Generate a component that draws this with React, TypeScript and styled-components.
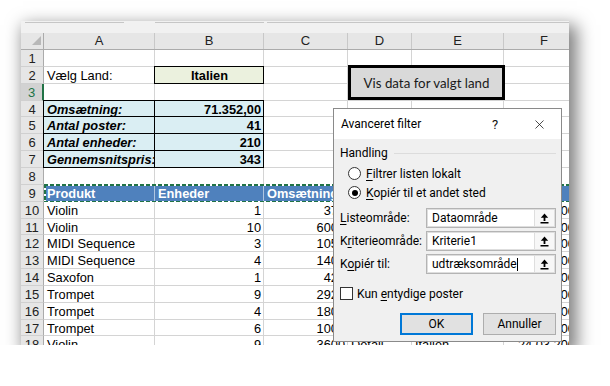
import React from "react";
import styled, { createGlobalStyle } from "styled-components";
import { X } from "lucide-react";

const GlobalStyle = createGlobalStyle`
  html, body {
    margin: 0;
    padding: 0;
    background: #fff;
  }
  body {
    font-family: "Liberation Sans", Arial, sans-serif;
  }
`;

const WIDTHS = [23, 111, 109, 84, 64, 92, 81];
const ROW_H = 16.85;
const GRID = "#d4d4d4";
const XL_GREEN = "#217346";

type CellData = {
  t?: string;
  align?: "left" | "right" | "center";
  bold?: boolean;
  italic?: boolean;
  bg?: string;
  boxed?: boolean;
  color?: string;
};

const boxBlue = { bg: "#daeef3", boxed: true, bold: true };
const head = { bg: "#4f81bd", color: "#fff", bold: true };

const sales: [string, number, number, string, string][] = [
  ["Violin", 1, 375, "Detail", "Italien"],
  ["Violin", 10, 6000, "Engros", "Italien"],
  ["MIDI Sequence", 3, 1050, "Detail", "Italien"],
  ["MIDI Sequence", 4, 1400, "Detail", "Italien"],
  ["Saxofon", 1, 425, "Detail", "Italien"],
  ["Trompet", 9, 2925, "Engros", "Italien"],
  ["Trompet", 4, 1800, "Detail", "Italien"],
  ["Trompet", 6, 1000, "Detail", "Italien"],
  ["Violin", 9, 3600, "Detail", "Italien"],
];

const rows: CellData[][] = [
  [],
  [{ t: "Vælg Land:" }, { t: "Italien", align: "center", bold: true, bg: "#ebf1de", boxed: true }],
  [],
  [{ t: "Omsætning:", italic: true, ...boxBlue }, { t: "71.352,00", align: "right", ...boxBlue }],
  [{ t: "Antal poster:", italic: true, ...boxBlue }, { t: "41", align: "right", ...boxBlue }],
  [{ t: "Antal enheder:", italic: true, ...boxBlue }, { t: "210", align: "right", ...boxBlue }],
  [{ t: "Gennemsnitspris:", italic: true, ...boxBlue }, { t: "343", align: "right", ...boxBlue }],
  [],
  [
    { t: "Produkt", ...head },
    { t: "Enheder", ...head },
    { t: "Omsætning", ...head },
    { t: "Type", ...head },
    { t: "Land", ...head },
    { t: "Dato", ...head },
  ],
  ...sales.map(([p, u, o, type, land], i) => [
    { t: p },
    { t: String(u), align: "right" as const },
    { t: String(o), align: "right" as const },
    { t: type },
    { t: land },
    { t: `${26 - (i % 3)}.03.2007`, align: "right" as const },
  ]),
];

const Page = styled.div`
  padding: 21px 0 0 21px;
`;

const Frame = styled.div`
  position: relative;
  width: 548px;
  height: 324px;
  overflow: hidden;
  background: #fff;
  box-shadow: 5px 7px 16px 3px rgba(0, 0, 0, 0.5);
`;

const TopStrip = styled.div`
  display: flex;
  height: 12px;
  background: #f1f1f1;
`;

const BarEdge = styled.div<{ $w?: number; $ml: number }>`
  margin-left: ${(p) => p.$ml}px;
  margin-top: 1px;
  width: ${(p) => (p.$w ? `${p.$w}px` : "auto")};
  flex: ${(p) => (p.$w ? "none" : 1)};
  height: 1px;
  background: #c6c6c6;
`;

const HeadRow = styled.div`
  display: flex;
  height: 17px;
  box-sizing: border-box;
  background: #e6e6e6;
  border-bottom: 1px solid #ababab;
`;

const HeadCell = styled.div<{ $w: number }>`
  position: relative;
  flex: none;
  width: ${(p) => p.$w}px;
  box-sizing: border-box;
  border-right: 1px solid #c8c8c8;
  text-align: center;
  font-size: 13px;
  line-height: 16px;
  color: #222;
`;

const Corner = styled(HeadCell)`
  border-right-color: #ababab;
  &::after {
    content: "";
    position: absolute;
    right: 2px;
    bottom: 4px;
    border-left: 9px solid transparent;
    border-bottom: 9px solid #b8b8b8;
  }
`;

const Row = styled.div<{ $h: number }>`
  position: relative;
  display: flex;
  height: ${(p) => p.$h}px;
`;

const RowHead = styled.div<{ $active?: boolean }>`
  flex: none;
  width: ${WIDTHS[0]}px;
  box-sizing: border-box;
  background: ${(p) => (p.$active ? "#d2d2d2" : "#e6e6e6")};
  border-right: ${(p) => (p.$active ? `2px solid ${XL_GREEN}` : "1px solid #ababab")};
  border-bottom: 1px solid #d0d0d0;
  color: ${(p) => (p.$active ? XL_GREEN : "#222")};
  text-align: center;
  font-size: 13px;
  line-height: 17px;
`;

const Cell = styled.div<{
  $w: number;
  $align?: string;
  $bg?: string;
  $bold?: boolean;
  $italic?: boolean;
  $color?: string;
  $boxed?: boolean;
  $head?: boolean;
}>`
  position: relative;
  flex: none;
  width: ${(p) => p.$w}px;
  box-sizing: border-box;
  padding: 0 2px 0 3px;
  border-right: 1px solid ${(p) => (p.$head ? "rgba(255,255,255,0.55)" : GRID)};
  border-bottom: 1px solid ${GRID};
  background: ${(p) => p.$bg ?? "#fff"};
  color: ${(p) => p.$color ?? "#000"};
  font-size: 12.8px;
  line-height: 17px;
  font-weight: ${(p) => (p.$bold ? 700 : 400)};
  font-style: ${(p) => (p.$italic ? "italic" : "normal")};
  text-align: ${(p) => p.$align ?? "left"};
  white-space: nowrap;

  ${(p) =>
    p.$boxed &&
    `
    &::after {
      content: "";
      position: absolute;
      top: -1px;
      left: -1px;
      right: -1px;
      bottom: -1px;
      border: 1px solid #000;
      pointer-events: none;
    }
  `}
`;

const Marquee = styled.div`
  position: absolute;
  left: ${WIDTHS[0]}px;
  right: 0;
  top: -1px;
  bottom: -1px;
  pointer-events: none;
  background:
    repeating-linear-gradient(90deg, ${XL_GREEN} 0 4px, #fff 4px 6px) top left / 100% 2px no-repeat,
    repeating-linear-gradient(90deg, ${XL_GREEN} 0 4px, #fff 4px 6px) bottom left / 100% 2px no-repeat,
    repeating-linear-gradient(180deg, ${XL_GREEN} 0 4px, #fff 4px 6px) top left / 2px 100% no-repeat;
`;

const ShapeButton = styled.div`
  position: absolute;
  left: 327px;
  top: 44px;
  width: 157px;
  height: 35px;
  box-sizing: border-box;
  border: 3px solid #000;
  background: #d9d9d9;
  display: flex;
  align-items: center;
  justify-content: center;
  font-family: Lato, "Open Sans", sans-serif;
  font-size: 13.3px;
  color: #1a1a1a;
`;

/* dialog */

const Dialog = styled.div`
  position: absolute;
  left: 312px;
  top: 87px;
  width: 229px;
  height: 234px;
  box-sizing: border-box;
  border: 1px solid #8a8a8a;
  background: #f0f0f0;
  display: flex;
  flex-direction: column;
  font-family: Roboto, "Segoe UI", sans-serif;
  font-size: 12px;
  color: #000;
`;

const TitleBar = styled.div`
  flex: none;
  display: flex;
  align-items: center;
  height: 30px;
  padding-left: 7px;
  background: #fff;
`;

const Title = styled.div`
  flex: 1;
  font-size: 12px;
`;

const TitleButton = styled.div<{ $w: number }>`
  width: ${(p) => p.$w}px;
  height: 30px;
  display: flex;
  align-items: center;
  justify-content: center;
  font-size: 13px;
  color: #111;
`;

const Body = styled.div`
  flex: 1;
  display: flex;
  flex-direction: column;
  padding: 6px 5px 0 6px;
`;

const GroupHead = styled.div`
  display: flex;
  align-items: center;
  gap: 6px;
  line-height: 16px;
`;

const GroupLine = styled.div`
  flex: 1;
  height: 1px;
  background: #dcdcdc;
`;

const RadioRow = styled.div<{ $first?: boolean }>`
  display: flex;
  align-items: center;
  gap: 5px;
  height: 19px;
  padding-left: 8px;
  margin-top: ${(p) => (p.$first ? 3 : 0)}px;
`;

const Radio = styled.span<{ $on?: boolean }>`
  position: relative;
  width: 13px;
  height: 13px;
  box-sizing: border-box;
  border: 1px solid #333;
  border-radius: 50%;
  background: #fff;

  ${(p) =>
    p.$on &&
    `
    &::after {
      content: "";
      position: absolute;
      inset: 2.5px;
      border-radius: 50%;
      background: #000;
    }
  `}
`;

const Key = styled.span`
  text-decoration: underline;
  text-underline-offset: 2px;
`;

const FieldRow = styled.div<{ $first?: boolean }>`
  display: flex;
  align-items: center;
  height: 20px;
  margin-top: ${(p) => (p.$first ? 6 : 3)}px;
`;

const FieldLabel = styled.div`
  width: 86px;
  flex: none;
`;

const FieldBox = styled.div`
  flex: 1;
  display: flex;
  height: 20px;
  box-sizing: border-box;
  border: 1px solid #b4b4b4;
  background: #dedede;
  padding: 1px;
  gap: 1px;
`;

const FieldInput = styled.div`
  flex: 1;
  display: flex;
  align-items: center;
  padding-left: 4px;
  background: #fff;
  font-size: 12px;
`;

const Caret = styled.span`
  width: 1px;
  height: 13px;
  background: #000;
`;

const RefButton = styled.div`
  width: 19px;
  display: flex;
  align-items: center;
  justify-content: center;
  background: #f7f7f7;
`;

const CheckRow = styled.div`
  display: flex;
  align-items: center;
  gap: 4px;
  margin-top: 13px;
  height: 13px;
`;

const Checkbox = styled.span`
  width: 13px;
  height: 13px;
  box-sizing: border-box;
  border: 1px solid #333;
  background: #fff;
`;

const ButtonRow = styled.div`
  display: flex;
  justify-content: flex-end;
  gap: 10px;
  margin-top: 13px;
`;

const DlgButton = styled.div<{ $primary?: boolean }>`
  width: 73px;
  height: 22px;
  box-sizing: border-box;
  display: flex;
  align-items: center;
  justify-content: center;
  background: #e1e1e1;
  border: ${(p) => (p.$primary ? "2px solid #0078d7" : "1px solid #adadad")};
`;

const RefIcon = () => (
  <svg width="9" height="11" viewBox="0 0 9 11">
    <path d="M4.5 0.5 L0.8 4.8 H3.6 V8 H5.4 V4.8 H8.2 Z" fill="#000" />
    <rect x="0.5" y="9" width="8" height="1.5" fill="#000" />
  </svg>
);

const fields: { label: React.ReactNode; value: string; caret?: boolean }[] = [
  { label: <><Key>L</Key>isteområde:</>, value: "Dataområde" },
  { label: <>K<Key>r</Key>iterieområde:</>, value: "Kriterie1" },
  { label: <>K<Key>o</Key>piér til:</>, value: "udtræksområde", caret: true },
];

const cols = ["A", "B", "C", "D", "E", "F"];

export default function App() {
  return (
    <>
      <GlobalStyle />
      <Page>
        <Frame>
          <TopStrip>
            <BarEdge $ml={4} $w={99} />
            <BarEdge $ml={31} $w={109} />
            <BarEdge $ml={3} />
          </TopStrip>

          <HeadRow>
            <Corner $w={WIDTHS[0]} />
            {cols.map((c, i) => (
              <HeadCell key={c} $w={WIDTHS[i + 1]}>
                {c}
              </HeadCell>
            ))}
          </HeadRow>

          {rows.map((cells, r) => {
            const h = Math.round((r + 1) * ROW_H) - Math.round(r * ROW_H);
            return (
              <Row key={r} $h={h}>
                <RowHead $active={r === 2}>{r + 1}</RowHead>
                {cols.map((c, i) => {
                  const d = cells[i] ?? {};
                  return (
                    <Cell
                      key={c}
                      $w={WIDTHS[i + 1]}
                      $align={d.align}
                      $bg={d.bg}
                      $bold={d.bold}
                      $italic={d.italic}
                      $color={d.color}
                      $boxed={d.boxed}
                      $head={r === 8}
                    >
                      {d.t}
                    </Cell>
                  );
                })}
                {r === 8 && <Marquee />}
              </Row>
            );
          })}

          <ShapeButton>Vis data for valgt land</ShapeButton>

          <Dialog>
            <TitleBar>
              <Title>Avanceret filter</Title>
              <TitleButton $w={30}>?</TitleButton>
              <TitleButton $w={7} />
              <TitleButton $w={44}>
                <X size={15} strokeWidth={1.2} />
              </TitleButton>
            </TitleBar>
            <Body>
              <GroupHead>
                Handling
                <GroupLine />
              </GroupHead>
              <RadioRow $first>
                <Radio />
                <span>
                  <Key>F</Key>iltrer listen lokalt
                </span>
              </RadioRow>
              <RadioRow>
                <Radio $on />
                <span>
                  <Key>K</Key>opiér til et andet sted
                </span>
              </RadioRow>

              {fields.map((f, i) => (
                <FieldRow key={f.value} $first={i === 0}>
                  <FieldLabel>{f.label}</FieldLabel>
                  <FieldBox>
                    <FieldInput>
                      {f.value}
                      {f.caret && <Caret />}
                    </FieldInput>
                    <RefButton>
                      <RefIcon />
                    </RefButton>
                  </FieldBox>
                </FieldRow>
              ))}

              <CheckRow>
                <Checkbox />
                <span>
                  Kun <Key>e</Key>ntydige poster
                </span>
              </CheckRow>

              <ButtonRow>
                <DlgButton $primary>OK</DlgButton>
                <DlgButton>Annuller</DlgButton>
              </ButtonRow>
            </Body>
          </Dialog>
        </Frame>
      </Page>
    </>
  );
}
